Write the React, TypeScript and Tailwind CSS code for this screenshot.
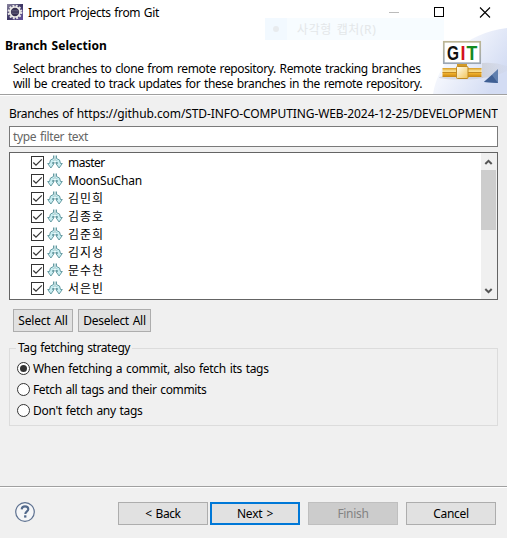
import type { ReactNode } from 'react';

function EclipseIcon() {
  return (
    <svg width="16" height="16" viewBox="0 0 16 16" className="shrink-0">
      <defs>
        <linearGradient id="ecl" x1="0" y1="0" x2="1" y2="1">
          <stop offset="0" stopColor="#8b86a0" />
          <stop offset="0.5" stopColor="#3b3563" />
          <stop offset="1" stopColor="#6a55a0" />
        </linearGradient>
      </defs>
      <rect width="16" height="16" fill="url(#ecl)" />
      <circle cx="8" cy="8" r="6.3" fill="none" stroke="#e4e2e4" strokeWidth="2.2" strokeDasharray="1.9 1.4" />
      <circle cx="8" cy="8" r="5" fill="#393252" stroke="#eeece8" strokeWidth="1.7" />
      <path d="M4.5 6.5h7M4.2 8h7.6M4.5 9.5h7" stroke="#66627f" strokeWidth="0.7" />
    </svg>
  );
}

function GitBanner() {
  return (
    <svg width="77" height="68" viewBox="430 26 77 68" className="absolute bottom-0 right-0">
      <defs>
        <linearGradient id="swoop" x1="0" y1="0" x2="1" y2="0.6">
          <stop offset="0" stopColor="#ffffff" />
          <stop offset="0.45" stopColor="#f1f4fc" />
          <stop offset="1" stopColor="#d3dcf3" />
        </linearGradient>
        <linearGradient id="gold" x1="0" y1="0" x2="0" y2="1">
          <stop offset="0" stopColor="#d89a20" />
          <stop offset="0.35" stopColor="#fce59a" />
          <stop offset="0.6" stopColor="#f0b02c" />
          <stop offset="1" stopColor="#c58412" />
        </linearGradient>
        <linearGradient id="box" x1="0" y1="0" x2="1" y2="1">
          <stop offset="0" stopColor="#fffef2" />
          <stop offset="1" stopColor="#f2c458" />
        </linearGradient>
        <linearGradient id="frame" x1="0" y1="0" x2="0" y2="1">
          <stop offset="0" stopColor="#bdb695" />
          <stop offset="1" stopColor="#9ba6b4" />
        </linearGradient>
        <linearGradient id="shade" x1="0" y1="0" x2="1" y2="0">
          <stop offset="0" stopColor="#c3c5cb" stopOpacity="0.6" />
          <stop offset="1" stopColor="#c3c5cb" stopOpacity="0.1" />
        </linearGradient>
      </defs>
      <path d="M433 94C438 62 464 33 507 28V94Z" fill="url(#swoop)" />
      <path d="M482 63Q495 62 507 66V71Q494 77 482 78Z" fill="url(#shade)" />
      <ellipse cx="461" cy="77.5" rx="22" ry="2" fill="#babdc5" opacity="0.45" />
      <path d="M484 82L498 69V83Z" fill="#607fae" />
      <path d="M484 82L492 75L498 83Z" fill="#3f5f93" />
      <rect x="443.8" y="41.8" width="36.4" height="21.4" fill="#fff" stroke="url(#frame)" strokeWidth="1.7" />
      <g fontFamily="'Liberation Sans', Arial, sans-serif" fontSize="19.5" fontWeight="700">
        <text x="447" y="59.6" fill="#111" textLength="12" lengthAdjust="spacingAndGlyphs">G</text>
        <text x="460.6" y="59.6" fill="#d3121d" textLength="5" lengthAdjust="spacingAndGlyphs">I</text>
        <text x="466.4" y="59.6" fill="#128a20" textLength="10.8" lengthAdjust="spacingAndGlyphs">T</text>
      </g>
      <rect x="457" y="64" width="10" height="4" fill="#d39a26" />
      <rect x="442.5" y="68" width="39" height="9" fill="url(#gold)" />
      <path d="M442.5 72.5h39" stroke="#b77b12" strokeWidth="0.8" />
      <rect x="456.5" y="66.5" width="11.5" height="12" rx="1" fill="url(#box)" stroke="#c08a22" />
    </svg>
  );
}

function BranchIcon() {
  return (
    <svg width="16" height="16" viewBox="0 0 16 16" className="ml-[3px] shrink-0">
      <g fill="#c9eef2" stroke="#669ba2" strokeLinejoin="round">
        <path d="M6.5 1.5V4.5Q2.5 5 2.5 9.5H0.7L3.9 14L7.1 9.5H5.5V8.5H7.5" />
        <path d="M9.5 1.5V4.5Q13.5 5 13.5 9.5H15.3L12.1 14L8.9 9.5H10.5V8.5H8.5" />
      </g>
      <path d="M7.5 1.5V6.5H5.8M8.5 1.5V6.5H10.2" fill="none" stroke="#9cc5ca" strokeWidth="0.7" />
    </svg>
  );
}

function BranchRow({ name, className }: { name: string; className: string }) {
  return (
    <div className="flex h-[18px] items-center pl-[21px]">
      <svg width="13" height="13" viewBox="0 0 13 13" className="mt-px shrink-0">
        <rect x="0.5" y="0.5" width="12" height="12" fill="#fff" stroke="#333" />
        <path d="M2.3 6.5L5 9.2L10.8 3.4" fill="none" stroke="#333" strokeWidth="1.2" />
      </svg>
      <BranchIcon />
      <span className={`ml-[5px] ${className}`}>{name}</span>
    </div>
  );
}

function Radio({ checked = false, className, children }: { checked?: boolean; className: string; children: ReactNode }) {
  return (
    <div className="flex h-[21px] items-center">
      <svg width="13" height="13" viewBox="0 0 13 13" className="shrink-0">
        <circle cx="6.5" cy="6.5" r="6" fill="#fff" stroke="#333" />
        {checked && <circle cx="6.5" cy="6.5" r="3.5" fill="#333" />}
      </svg>
      <span className={`ml-[3px] ${className}`}>{children}</span>
    </div>
  );
}

function Button({ className, label, labelClass }: { className: string; label: string; labelClass: string }) {
  return (
    <button className={`flex h-[23px] shrink-0 items-center justify-center [word-spacing:1px] ${className}`}>
      <span className={labelClass}>{label}</span>
    </button>
  );
}

const branches = [
  { name: 'master', className: 'tracking-[-0.5px]' },
  { name: 'MoonSuChan', className: 'tracking-[-0.2px]' },
  { name: '김민희', className: 'tracking-[0.9px]' },
  { name: '김종호', className: 'tracking-[0.9px]' },
  { name: '김준희', className: 'tracking-[0.9px]' },
  { name: '김지성', className: 'tracking-[0.9px]' },
  { name: '문수찬', className: 'tracking-[0.9px]' },
  { name: '서은빈', className: 'tracking-[0.9px]' },
];

export default function App() {
  return (
    <div className="flex h-[538px] w-[507px] flex-col overflow-hidden whitespace-nowrap bg-[#f0f0f0] font-['Noto_Sans','Noto_Sans_CJK_KR',sans-serif] text-[12px] leading-[15px] text-black [word-spacing:1px]">
      <header className="relative h-[95px] shrink-0 border-b border-[#a0a0a0] bg-white">
        <div className="flex h-6 items-center pl-[7px]">
          <EclipseIcon />
          <span className="ml-[5px] tracking-[-0.38px]">Import Projects from Git</span>
          <svg width="120" height="24" viewBox="387 0 120 24" className="ml-auto">
            <path d="M389 12.5h10" stroke="#bbb" />
            <rect x="434.5" y="7.5" width="9" height="9" fill="none" stroke="#000" />
            <path d="M480 7.5l10 10M490 7.5l-10 10" stroke="#000" strokeWidth="1.1" />
          </svg>
        </div>
        <div className="absolute left-[265px] top-[18px] flex h-[22px] w-[179px] items-center bg-[#f7fcff] text-[#e4e7e9]">
          <div className="flex h-full w-[22px] items-center justify-center bg-[#f2f9ff]">
            <span className="size-[6px] rounded-full bg-[#e8ebee]" />
          </div>
          <span className="ml-[10px] tracking-[0.6px]">사각형 캡처(R)</span>
        </div>
        <GitBanner />
        <h1 className="relative mt-[14px] pl-[5px] font-bold tracking-[0.05px]">Branch Selection</h1>
        <p className="relative mt-[8px] pl-[13px]">
          <span className="block tracking-[-0.37px]">Select branches to clone from remote repository. Remote tracking branches</span>
          <span className="block tracking-[-0.4px]">will be created to track updates for these branches in the remote repository.</span>
        </p>
      </header>

      <main className="flex flex-1 flex-col border-t border-white px-[9px]">
        <div className="mt-[10px] h-[15px] overflow-hidden">
          <span className="tracking-[-0.36px]">Branches of </span>
          <span className="tracking-[-0.09px]">https://github.com/STD-INFO-COMPUTING-WEB-2024-12-25/DEVELOPMENT</span>
        </div>
        <div className="mt-[5px] flex h-[21px] items-center border border-[#7a7a7a] bg-white pl-[3px] text-[#666]">
          <span className="tracking-[-0.36px]">type filter text</span>
        </div>
        <div className="mt-[5px] flex h-[148px] border border-[#646464] bg-white">
          <div className="flex-1">
            {branches.map((b) => (
              <BranchRow key={b.name} name={b.name} className={b.className} />
            ))}
          </div>
          <div className="flex w-4 flex-col items-center bg-[#f0f0f0]">
            <svg width="16" height="17" viewBox="0 0 16 17" className="shrink-0">
              <path d="M4.3 11L7.5 7.8L10.7 11" fill="none" stroke="#555" strokeWidth="2" />
            </svg>
            <div className="h-[60px] w-[15px] self-start bg-[#cdcdcd]" />
            <svg width="16" height="17" viewBox="0 0 16 17" className="mt-auto shrink-0">
              <path d="M4.3 7L7.5 10.2L10.7 7" fill="none" stroke="#555" strokeWidth="2" />
            </svg>
          </div>
        </div>
        <div className="mt-[9px] flex gap-[5px] pl-1">
          <Button className="w-[60px] border border-[#adadad] bg-[#e1e1e1]" label="Select All" labelClass="tracking-[-0.2px]" />
          <Button className="w-[73px] border border-[#adadad] bg-[#e1e1e1]" label="Deselect All" labelClass="tracking-[-0.3px]" />
        </div>
        <fieldset className="mt-[16px] h-[78px] border border-[#dcdcdc] px-[7px]">
          <div className="-mt-[9px] flex h-[17px]">
            <span className="-ml-px bg-[#f0f0f0] px-[2px] tracking-[-0.4px]">Tag fetching strategy</span>
          </div>
          <div className="mt-px">
            <Radio checked className="tracking-[-0.32px]">When fetching a commit, also fetch its tags</Radio>
            <Radio className="tracking-[-0.36px]">Fetch all tags and their commits</Radio>
            <Radio className="tracking-[-0.3px]">Don't fetch any tags</Radio>
          </div>
        </fieldset>
      </main>

      <footer className="flex h-[52px] shrink-0 border-t border-[#a0a0a0]">
        <div className="flex h-full w-full border-t border-white pl-[15px] pr-[11px] pt-[14px]">
          <svg width="20" height="20" viewBox="0 0 20 20">
            <circle cx="10" cy="10" r="9.3" fill="#f5f6f8" stroke="#5d7190" strokeWidth="1.2" />
            <path d="M6.7 7.4C6.8 5.4 8.1 4.4 10 4.4S13.3 5.5 13.3 7.2C13.3 9.3 10.3 9.4 10.3 12" fill="none" stroke="#536a8c" strokeWidth="2.1" />
            <rect x="9.1" y="13.3" width="2.3" height="2.3" fill="#536a8c" />
          </svg>
          <div className="ml-auto flex">
            <Button className="w-[90px] border border-[#adadad] bg-[#e1e1e1]" label="< Back" labelClass="tracking-[-0.4px]" />
            <Button className="ml-[2px] w-[90px] border-2 border-[#0078d7] bg-[#e1e1e1]" label="Next >" labelClass="tracking-[-0.2px]" />
            <Button className="ml-2 w-[90px] border border-[#bfbfbf] bg-[#cccccc] text-[#838383]" label="Finish" labelClass="tracking-[-0.3px]" />
            <Button className="ml-2 w-[90px] border border-[#adadad] bg-[#e1e1e1]" label="Cancel" labelClass="tracking-[-0.3px]" />
          </div>
        </div>
      </footer>
    </div>
  );
}
